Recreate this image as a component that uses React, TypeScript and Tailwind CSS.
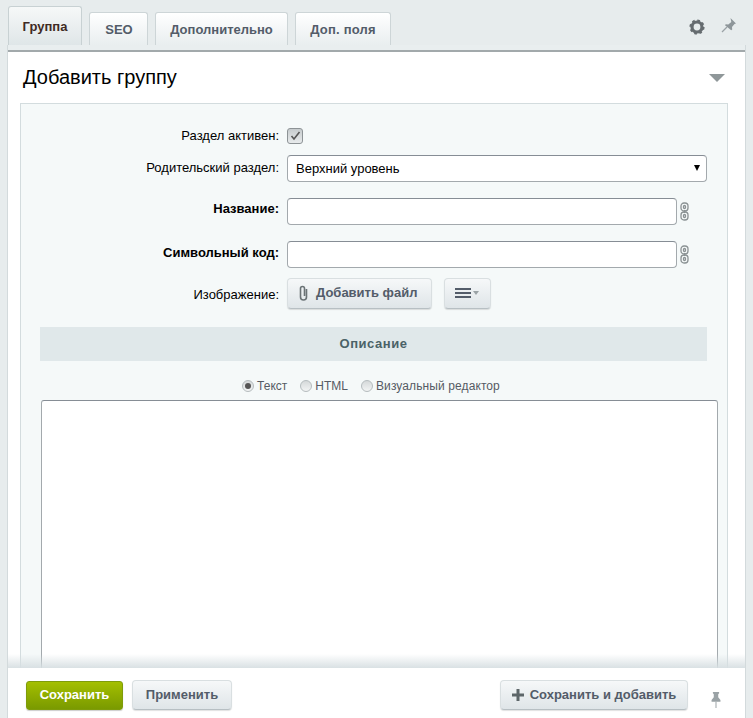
import React from 'react';

const font = { fontFamily: '"Liberation Sans", Arial, sans-serif' };

function Tab({ label, active, className }: { label: string; active?: boolean; className: string }) {
  if (active) {
    return (
      <div className={`flex h-[39px] items-center justify-center rounded-t-[3px] border border-b-0 border-[#c8d1d3] bg-gradient-to-b from-[#f6f8f8] to-[#dfe6e8] pt-[1px] text-[13px] font-bold text-[#3f2a24] ${className}`}>
        {label}
      </div>
    );
  }
  return (
    <div className={`flex h-[33px] items-center justify-center rounded-t-[3px] border border-b-0 border-[#cdd5d7] bg-gradient-to-b from-[#ffffff] to-[#e9eeef] pt-[1px] text-[13px] font-bold text-[#535c69] ${className}`}>
      {label}
    </div>
  );
}

function ChainIcon({ className }: { className?: string }) {
  return (
    <svg width="9" height="19" viewBox="0 0 9 19" className={className} fill="none" stroke="#8b9294" strokeWidth="1.3">
      <rect x="1" y="1" width="7" height="8" rx="3" />
      <rect x="1" y="10" width="7" height="8" rx="3" />
      <rect x="3.5" y="3.5" width="2" height="3" rx="1" />
      <rect x="3.5" y="12.500" width="2" height="3" rx="1" />
      <path d="M4.500 8v3" />
    </svg>
  );
}

function Row({ label, bold, className, labelClassName, children }: { label: string; bold?: boolean; className: string; labelClassName?: string; children: React.ReactNode }) {
  return (
    <div className={`flex items-center ${className}`}>
      <div className={`w-[258px] text-right text-[13px] text-[#000] ${bold ? 'font-bold' : ''} ${labelClassName || ''}`}>{label}</div>
      <div className="ml-[8px] flex flex-1 items-center">{children}</div>
    </div>
  );
}

function Radio({ checked, label, className }: { checked?: boolean; label: string; className?: string }) {
  return (
    <div className={`flex items-center text-[12px] text-[#555b64] ${className || ''}`}>
      <span className="mr-[3px] flex h-[12px] w-[12px] items-center justify-center rounded-full border border-[#b5bcbe] bg-gradient-to-b from-[#d5d9da] to-[#f2f4f4]">
        {checked && <span className="h-[6px] w-[6px] rounded-full bg-[#555]" />}
      </span>
      {label}
    </div>
  );
}

const inputCls = 'h-[27px] rounded-[4px] border border-[#a3a9ad] border-t-[#868d95] bg-white';
const btnCls = 'flex items-center rounded-[4px] border border-[#d9dfe1] border-b-[#b7bfc3] bg-gradient-to-b from-[#f6f8f9] to-[#dfe5e8] shadow-[0_1px_1px_rgba(0,0,0,0.12)]';

export default function App() {
  return (
    <div className="flex h-[718px] w-[753px] flex-col overflow-hidden bg-[#e7eced]" style={font}>
      <div className="flex h-[45px] shrink-0 items-end pl-[8px] pr-[8px]">
        <Tab label="Группа" active className="w-[74px]" />
        <Tab label="SEO" className="ml-[7px] w-[59px] pl-[1px]" />
        <Tab label="Дополнительно" className="ml-[7px] w-[133px]" />
        <Tab label="Доп. поля" className="ml-[7px] w-[96px] tracking-[0.2px]" />
        <div className="ml-auto flex h-[39px] items-start pt-[11px]">
          <svg width="16" height="16" viewBox="0 0 16 16" className="mr-[16px] mt-[2px]">
            <circle cx="8" cy="8" r="5" fill="none" stroke="#666c70" strokeWidth="3.2" />
            <circle cx="8" cy="8" r="6.6" fill="none" stroke="#666c70" strokeWidth="2" strokeDasharray="2.6 2.6" />
          </svg>
          <svg width="16" height="16" viewBox="0 0 16 16" className="mr-[8px]">
            <path d="M1 15l5-5" stroke="#9aa2a5" strokeWidth="1.2" />
            <path d="M9.5 1l5.5 5.5-1.5 .5-2.5 3 .2 2.6-1 .7L4 8.2l.7-1 2.6.2 3-2.5z" fill="#8e969a" />
          </svg>
        </div>
      </div>
      <div className="relative mx-[7px] flex min-h-0 flex-1 flex-col border-x border-[#d3dadc] bg-white">
        <div className="h-[7px] shrink-0 border-b-[2px] border-b-[#a2a9ab] bg-[#e9eeef]" />
        <div className="flex h-[51px] shrink-0 items-center justify-between pb-[2px] pl-[15px] pr-[20px]">
          <h1 className="pt-[2px] text-[20px] font-normal leading-[49px] text-black">Добавить группу</h1>
          <div className="mt-[2px] h-0 w-0 border-x-[8px] border-t-[8px] border-x-transparent border-t-[#8f9799]" />
        </div>
        <div className="ml-[12px] mr-[17px] flex min-h-0 flex-1 flex-col overflow-hidden border border-b-0 border-[#d3dcde] bg-[#f5f9f9] pr-[9px]">
          <Row label="Раздел активен:" className="mt-[22px] h-[20px]">
            <span className="flex h-[16px] w-[16px] items-center justify-center rounded-[3px] border border-[#8d9396] bg-gradient-to-b from-[#c6cbcd] to-[#e8ebec]">
              <svg width="11" height="10" viewBox="0 0 11 10" fill="none" stroke="#555" strokeWidth="1.6"><path d="M1.5 5l2.500 3 5.500-7" /></svg>
            </span>
          </Row>
          <Row label="Родительский раздел:" className="mt-[9px]">
            <div className={`${inputCls} flex w-[420px] items-center justify-between pl-[8px] pr-[6px] text-[13px] text-black`}>
              <span className="pt-[1px]">Верхний уровень</span>
              <span className="h-0 w-0 border-x-[3.5px] border-t-[6px] border-x-transparent border-t-black" />
            </div>
          </Row>
          <Row label="Название:" bold labelClassName="pb-[4px]" className="mt-[16px]">
            <div className={`${inputCls} w-[390px]`} />
            <ChainIcon className="ml-[3px]" />
          </Row>
          <Row label="Символьный код:" bold labelClassName="pb-[2px]" className="mt-[16px]">
            <div className={`${inputCls} w-[390px]`} />
            <ChainIcon className="ml-[3px]" />
          </Row>
          <Row label="Изображение:" labelClassName="pt-[4px]" className="mt-[10px] h-[31px]">
            <div className={`${btnCls} h-[31px] w-[145px] pl-[10px] text-[13px] font-bold text-[#535c69]`}>
              <svg width="11" height="16" viewBox="0 0 11 16" fill="none" stroke="#6b7376" strokeWidth="1.6" className="mr-[7px]">
                <path d="M8.500 4v8a3 3 0 0 1-6 0V3.500a2 2 0 0 1 4 0V11" />
              </svg>
              <span className="font-bold">Добавить файл</span>
            </div>
            <div className={`${btnCls} ml-[12px] h-[31px] w-[47px] pl-[10px]`}>
              <div className="flex w-[16px] flex-col gap-[2px]">
                <span className="h-[2px] bg-[#535c69]" />
                <span className="h-[2px] bg-[#535c69]" />
                <span className="h-[2px] bg-[#535c69]" />
              </div>
              <span className="ml-[2px] h-0 w-0 border-x-[3.5px] border-t-[4px] border-x-transparent border-t-[#9aa2a5]" />
            </div>
          </Row>
          <div className="ml-[19px] mr-[11px] mt-[18px] flex h-[34px] shrink-0 items-center justify-center bg-[#e0e8ea] text-[13px] font-bold tracking-[0.55px] text-[#4b6267]">Описание</div>
          <div className="mt-[18px] flex h-[15px] shrink-0 justify-center pl-[3px]">
            <Radio checked label="Текст" />
            <Radio label="HTML" className="ml-[13px]" />
            <Radio label="Визуальный редактор" className="ml-[13px] tracking-[0.1px]" />
          </div>
          <div className="ml-[20px] mt-[6px] h-[400px] w-[677px] shrink-0 rounded-[3px] border border-[#a3a9ad] border-t-[#868d95] bg-white" />
        </div>
        <div className="pointer-events-none absolute bottom-[50px] left-0 right-0 h-[14px] bg-gradient-to-b from-[rgba(215,223,226,0)] to-[rgba(215,223,226,0.95)]" />
        <div className="flex h-[50px] shrink-0 items-center bg-white pl-[18px] pr-[23px] pt-[4px]">
          <div className="flex h-[29px] w-[97px] items-center justify-center rounded-[3px] border border-[#7f9c0a] bg-gradient-to-b from-[#a4bf00] to-[#7a9a00] text-[13px] font-bold text-white shadow-[0_1px_1px_rgba(0,0,0,0.2)]">Сохранить</div>
          <div className={`${btnCls} ml-[9px] h-[30px] w-[100px] justify-center text-[13px] font-bold text-[#535c69]`}>Применить</div>
          <div className={`${btnCls} ml-auto h-[30px] w-[188px] justify-center text-[13px] font-bold text-[#535c69]`}>
            <svg width="12" height="12" viewBox="0 0 12 12" className="mr-[6px]" fill="#5d6669"><path d="M4.500 0h3v4.500H12v3H7.500V12h-3V7.500H0v-3h4.500z" /></svg>
            Сохранить и добавить
          </div>
          <svg width="12" height="16" viewBox="0 0 12 18" className="ml-[22px] mt-[9px]">
            <path d="M6 11v7" stroke="#a3aaad" strokeWidth="1.2" />
            <path d="M2.500 0h7v1.500l-1 1V6l2.500 3v2H1V9l2.500-3V2.500l-1-1z" fill="#9aa2a5" />
          </svg>
        </div>
      </div>
    </div>
  );
}
